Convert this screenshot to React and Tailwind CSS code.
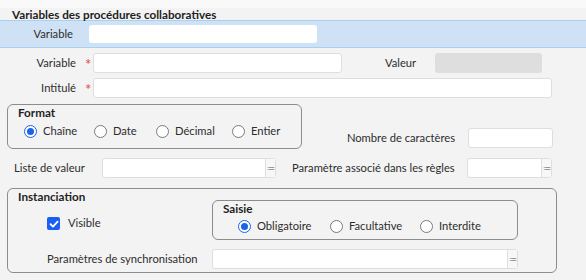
function Input({ className = "", list = false }) {
  return (
    <div
      className={`flex h-[20px] rounded-[3px] border border-[#dedede] bg-white ${className}`}
    >
      <div className="flex-1" />
      {list && (
        <div className="flex w-[10px] items-center justify-center border-l border-[#dedede] bg-[#f7f7f7] text-[8px] leading-none text-[#999]">
          ≔
        </div>
      )}
    </div>
  );
}

function Radio({ checked, label, className = "" }) {
  return (
    <div className={`flex items-center gap-[6px] ${className}`}>
      {checked ? (
        <span className="flex h-[13px] w-[13px] items-center justify-center rounded-full border border-[#1a62e8] bg-white">
          <span className="h-[7px] w-[7px] rounded-full bg-[#1a62e8]" />
        </span>
      ) : (
        <span className="h-[13px] w-[13px] rounded-full border border-[#7a7a7a] bg-white" />
      )}
      <span>{label}</span>
    </div>
  );
}

function Star() {
  return (
    <span className="mt-[3px] block text-[15px] leading-none text-[#e8463a]">*</span>
  );
}

export default function App() {
  return (
    <div
      className="h-[280px] w-[586px] overflow-hidden whitespace-nowrap bg-[#f3f3f3] text-[11.2px] text-[#2d2d2d]"
      style={{ fontFamily: "Lato, 'Open Sans', sans-serif" }}
    >
      {/* Titre */}
      <div className="h-[8px] bg-[#f9f9f9]" />
      <div className="h-[12px] pl-[12px] text-[11.7px] font-bold leading-[12px] text-[#1e1e1e]">
        Variables des procédures collaboratives
      </div>

      {/* Recherche */}
      <div className="flex h-[28px] items-center border-y border-[#a8d0f2] bg-[#cfe2f5]">
        <div className="w-[73px] text-right">Variable</div>
        <div className="ml-[16px] h-[18px] w-[228px] rounded-[3px] bg-white" />
      </div>

      {/* Variable / Valeur */}
      <div className="mt-[5px] flex h-[20px] items-center">
        <div className="w-[76px] text-right">Variable</div>
        <div className="ml-[9px] w-[8px]">
          <Star />
        </div>
        <Input className="w-[249px]" />
        <div className="ml-[43px] w-[50px]">Valeur</div>
        <div className="h-[20px] w-[107px] rounded-[3px] bg-[#dedede]" />
      </div>

      {/* Intitulé */}
      <div className="mt-[5px] flex h-[20px] items-center">
        <div className="w-[76px] text-right">Intitulé</div>
        <div className="ml-[9px] w-[8px]">
          <Star />
        </div>
        <Input className="w-[459px]" />
      </div>

      {/* Format */}
      <div className="mt-[6px] flex items-end">
        <div className="ml-[7px] h-[45px] w-[295px] rounded-[6px] border border-[#8c8c8c] px-[10px]">
          <div className="text-[11.7px] font-bold leading-[14px] text-[#1e1e1e]">Format</div>
          <div className="mt-[4px] flex items-center">
            <Radio checked label="Chaîne" className="ml-[6px] w-[70px]" />
            <Radio label="Date" className="w-[62px]" />
            <Radio label="Décimal" className="w-[76px]" />
            <Radio label="Entier" />
          </div>
        </div>
        <div className="mb-[1px] flex h-[20px] items-center">
          <div className="w-[153px] text-right">Nombre de caractères</div>
          <Input className="ml-[13px] w-[85px]" />
        </div>
      </div>

      {/* Listes */}
      <div className="mt-[9px] flex h-[20px] items-center">
        <div className="ml-[14px] w-[88px]">Liste de valeur</div>
        <Input list className="w-[174px]" />
        <div className="ml-[16px] w-[164px]">Paramètre associé dans les règles</div>
        <Input list className="ml-[11px] w-[85px]" />
      </div>

      {/* Instanciation */}
      <div className="ml-[7px] mt-[10px] h-[85px] w-[550px] rounded-[6px] border border-[#8c8c8c] pl-[10px]">
        <div className="text-[11.7px] font-bold leading-[14px] text-[#1e1e1e]">Instanciation</div>
        <div className="flex">
          <div className="w-[194px]">
            <div className="ml-[29px] mt-[14px] flex h-[13px] items-center gap-[8px]">
              <span className="flex h-[13px] w-[13px] items-center justify-center rounded-[2px] bg-[#1a5ff5]">
                <svg width="10" height="10" viewBox="0 0 10 10" fill="none">
                  <path
                    d="M1.5 5.2 L4 7.6 L8.6 2.6"
                    stroke="white"
                    strokeWidth="1.8"
                    strokeLinecap="round"
                    strokeLinejoin="round"
                  />
                </svg>
              </span>
              <span>Visible</span>
            </div>
          </div>
          <div className="mt-[-3px] h-[40px] w-[306px] rounded-[6px] border border-[#8c8c8c] pl-[10px]">
            <div className="text-[11.7px] font-bold leading-[14px] text-[#1e1e1e]">Saisie</div>
            <div className="mt-[3px] flex items-center">
              <Radio checked label="Obligatoire" className="ml-[15px] w-[92px]" />
              <Radio label="Facultative" className="w-[90px]" />
              <Radio label="Interdite" />
            </div>
          </div>
        </div>
        <div className="mt-[9px] flex h-[20px] items-center">
          <div className="ml-[29px] w-[165px]">Paramètres de synchronisation</div>
          <Input list className="w-[306px]" />
        </div>
      </div>
    </div>
  );
}
